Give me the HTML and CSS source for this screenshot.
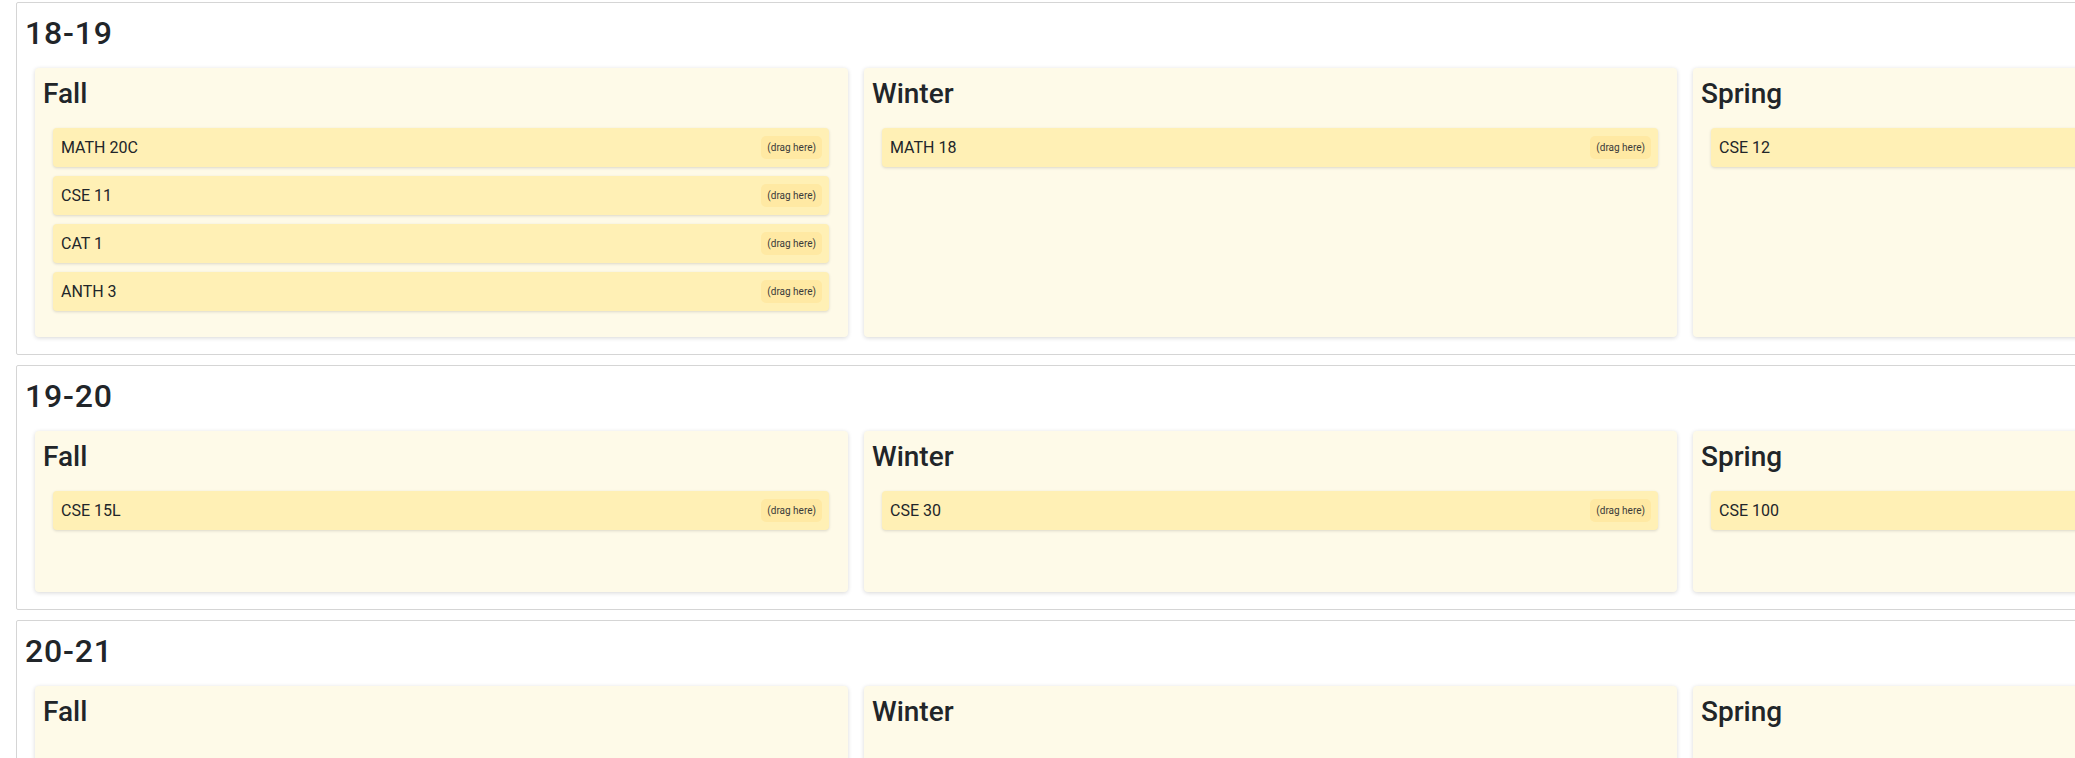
FILE: index.html
```html
<!DOCTYPE html>
<html lang="en">
<head>
<meta charset="utf-8">
<title>Planner</title>
<link rel="stylesheet" href="styles.css">
</head>
<body>
<div class="page">
  <section class="year">
    <h2 class="year-title">18-19</h2>
    <div class="quarters">
      <div class="quarter">
        <h3 class="quarter-title">Fall</h3>
        <div class="course-list">
          <div class="course"><span class="course-name">MATH 20C</span><span class="handle">(drag here)</span></div>
          <div class="course"><span class="course-name">CSE 11</span><span class="handle">(drag here)</span></div>
          <div class="course"><span class="course-name">CAT 1</span><span class="handle">(drag here)</span></div>
          <div class="course"><span class="course-name">ANTH 3</span><span class="handle">(drag here)</span></div>
        </div>
      </div>
      <div class="quarter">
        <h3 class="quarter-title">Winter</h3>
        <div class="course-list">
          <div class="course"><span class="course-name">MATH 18</span><span class="handle">(drag here)</span></div>
        </div>
      </div>
      <div class="quarter">
        <h3 class="quarter-title">Spring</h3>
        <div class="course-list">
          <div class="course"><span class="course-name">CSE 12</span><span class="handle">(drag here)</span></div>
        </div>
      </div>
    </div>
  </section>
  <section class="year">
    <h2 class="year-title">19-20</h2>
    <div class="quarters">
      <div class="quarter">
        <h3 class="quarter-title">Fall</h3>
        <div class="course-list">
          <div class="course"><span class="course-name">CSE 15L</span><span class="handle">(drag here)</span></div>
        </div>
      </div>
      <div class="quarter">
        <h3 class="quarter-title">Winter</h3>
        <div class="course-list">
          <div class="course"><span class="course-name">CSE 30</span><span class="handle">(drag here)</span></div>
        </div>
      </div>
      <div class="quarter">
        <h3 class="quarter-title">Spring</h3>
        <div class="course-list">
          <div class="course"><span class="course-name">CSE 100</span><span class="handle">(drag here)</span></div>
        </div>
      </div>
    </div>
  </section>
  <section class="year">
    <h2 class="year-title">20-21</h2>
    <div class="quarters">
      <div class="quarter">
        <h3 class="quarter-title">Fall</h3>
        <div class="course-list"></div>
      </div>
      <div class="quarter">
        <h3 class="quarter-title">Winter</h3>
        <div class="course-list"></div>
      </div>
      <div class="quarter">
        <h3 class="quarter-title">Spring</h3>
        <div class="course-list"></div>
      </div>
    </div>
  </section>
</div>
</body>
</html>
```

FILE: styles.css
```css
html, body {
  margin: 0;
  padding: 0;
  overflow: hidden;
  background: #ffffff;
}

body {
  font-family: Roboto, "Liberation Sans", Arial, sans-serif;
  color: #212529;
  font-size: 16px;
}

.page {
  padding: 2px 0 0 16px;
}

.year {
  width: max-content;
  border: 1px solid #d5d5d5;
  border-radius: 2px;
  padding: 11px 18px 17px 8px;
  margin-bottom: 10px;
}

.year-title {
  margin: 0 0 16px 0;
  font-size: 32px;
  font-weight: 500;
  line-height: 1.2;
  letter-spacing: 0.8px;
}

.quarters {
  display: flex;
  gap: 16px;
  padding-left: 10px;
}

.quarter {
  flex: 0 0 813px;
  width: 813px;
  box-sizing: border-box;
  background: #fefae8;
  border-radius: 4px;
  box-shadow: 0 1px 4px rgba(0, 0, 0, 0.16);
  padding: 9px 9px 9px 8px;
}

.quarter-title {
  margin: 0 0 8px 0;
  font-size: 28px;
  font-weight: 500;
  line-height: 1.2;
}

.course-list {
  box-sizing: border-box;
  min-height: 101px;
  padding: 9px 10px 8px 10px;
}

.course {
  display: flex;
  align-items: center;
  justify-content: space-between;
  background: #fff0b5;
  border-radius: 4px;
  box-shadow: 0 1px 3px rgba(0, 0, 0, 0.14);
  padding: 8px 7px 8px 8px;
  margin-bottom: 9px;
  line-height: 23px;
}

.course-name {
  font-size: 16px;
}

.handle {
  font-size: 10px;
  line-height: 13px;
  color: #3a3a3a;
  background: #ffe9a3;
  border-radius: 5px;
  padding: 5px 6px;
}
```
